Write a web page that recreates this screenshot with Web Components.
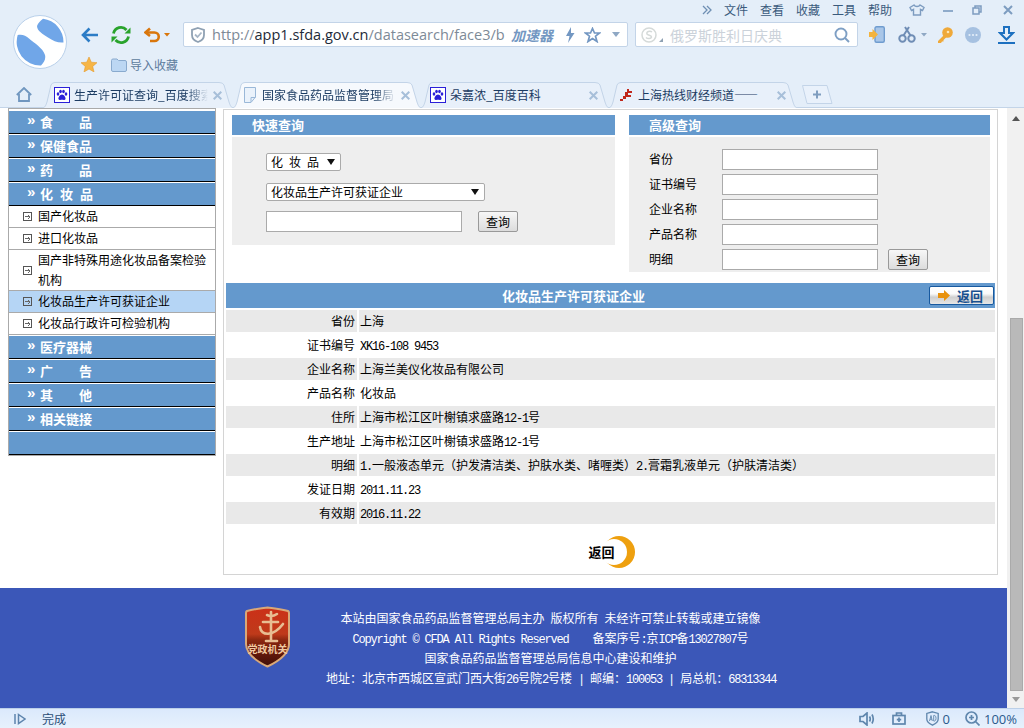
<!DOCTYPE html>
<html lang="zh">
<head>
<meta charset="utf-8">
<title>化妆品生产许可获证企业</title>
<style>
  html, body { margin: 0; padding: 0; height: 100%; overflow: hidden; background: #fff; }
  body { font: 12px/20px "Noto Sans CJK SC", "Liberation Sans", sans-serif; color: #000; }
</style>
</head>
<body>
<browser-window>
  <browser-toolbar slot="chrome"></browser-toolbar>
  <tab-strip slot="chrome">
    <browser-tab width="190" icon="paw" fade>生产许可证查询_百度搜索</browser-tab>
    <browser-tab width="188" icon="doc" active fade>国家食品药品监督管理局</browser-tab>
    <browser-tab width="188" icon="paw" pad="10">朵嘉浓_百度百科</browser-tab>
    <browser-tab width="188" icon="fin">上海热线财经频道——</browser-tab>
  </tab-strip>

  <page-body>
    <side-nav slot="side">
      <nav-head>食&emsp;&emsp;品</nav-head>
      <nav-head>保健食品</nav-head>
      <nav-head>药&emsp;&emsp;品</nav-head>
      <nav-head spaced>化妆品</nav-head>
      <nav-item>国产化妆品</nav-item>
      <nav-item>进口化妆品</nav-item>
      <nav-item>国产非特殊用途化妆品备案检验机构</nav-item>
      <nav-item selected>化妆品生产许可获证企业</nav-item>
      <nav-item>化妆品行政许可检验机构</nav-item>
      <nav-head>医疗器械</nav-head>
      <nav-head>广&emsp;&emsp;告</nav-head>
      <nav-head>其&emsp;&emsp;他</nav-head>
      <nav-head>相关链接</nav-head>
      <nav-head></nav-head>
    </side-nav>

    <main-panel slot="main">
      <search-forms></search-forms>
      <title-bar>化妆品生产许可获证企业</title-bar>
      <info-table>
        <info-row label="省份">上海</info-row>
        <info-row label="证书编号"><latin-run>XK16-108 9453</latin-run></info-row>
        <info-row label="企业名称">上海兰美仪化妆品有限公司</info-row>
        <info-row label="产品名称">化妆品</info-row>
        <info-row label="住所">上海市松江区叶榭镇求盛路<latin-run>12-1</latin-run>号</info-row>
        <info-row label="生产地址">上海市松江区叶榭镇求盛路<latin-run>12-1</latin-run>号</info-row>
        <info-row label="明细"><latin-run>1.</latin-run>一般液态单元（护发清洁类、护肤水类、啫喱类）<latin-run>2.</latin-run>膏霜乳液单元（护肤清洁类）</info-row>
        <info-row label="发证日期"><latin-run>2011.11.23</latin-run></info-row>
        <info-row label="有效期"><latin-run>2016.11.22</latin-run></info-row>
      </info-table>
      <round-back>返回</round-back>
    </main-panel>

    <site-footer slot="footer">
      <div>本站由国家食品药品监督管理总局主办<latin-run>&nbsp;</latin-run>版权所有<latin-run>&nbsp;</latin-run>未经许可禁止转载或建立镜像</div>
      <div><latin-run>Copyright © CFDA All Rights Reserved&nbsp;&nbsp;&nbsp;&nbsp;</latin-run>备案序号<latin-run>:</latin-run>京<latin-run>ICP</latin-run>备<latin-run>13027807</latin-run>号</div>
      <div>国家食品药品监督管理总局信息中心建设和维护</div>
      <div>地址：北京市西城区宣武门西大街<latin-run>26</latin-run>号院<latin-run>2</latin-run>号楼<latin-run>&nbsp;|&nbsp;</latin-run>邮编：<latin-run>100053&nbsp;|&nbsp;</latin-run>局总机：<latin-run>68313344</latin-run></div>
    </site-footer>

    <page-scrollbar slot="scroll"></page-scrollbar>
  </page-body>

  <status-bar slot="status"></status-bar>
</browser-window>

<script>
const define = (name, css, html) => {
  customElements.define(name, class extends HTMLElement {
    constructor() {
      super();
      this.attachShadow({ mode: 'open' });
    }
    connectedCallback() {
      const body = typeof html === 'function' ? html(this) : html;
      this.shadowRoot.innerHTML = `<style>${css}</style>${body}`;
    }
  });
};

define('browser-window', `
  :host { display: flex; flex-direction: column; width: 1024px; height: 728px; overflow: hidden; }
`, `<slot name="chrome"></slot><slot></slot><slot name="status"></slot>`);

define('latin-run', `
  :host { display: inline; font: 12px "Liberation Mono", monospace; letter-spacing: -1.2px; }
`, `<slot></slot>`);

// top of the browser: logo, menu, address bar, favourites
define('browser-toolbar', `
  :host { display: grid; grid-template-columns: 81px minmax(0, 1fr); grid-template-rows: 22px 25px 34px;
    height: 81px; background: #e4eef9; color: #3a5a7c; }
  svg { display: block; flex: none; }
  .logo { grid-row: 1 / 4; padding: 15px 0 0 13px; }
  .menu { display: flex; align-items: center; justify-content: flex-end; padding: 0 11px 2px 0; gap: 12px; line-height: 20px; }
  .address { display: flex; align-items: center; }
  .box { display: flex; align-items: center; box-sizing: border-box; height: 25px; background: #fff;
    border: 1px solid #c3d4e8; border-radius: 2px; flex: none; }
  .url-box { width: 445px; margin-left: 13px; padding-left: 7px; }
  .url { margin-left: 7px; width: 291px; flex: none; font: 14.5px/22px "Open Sans", "Noto Sans", sans-serif; color: #7d8a97; white-space: nowrap; }
  .url b { font-weight: 400; color: #1d2a38; }
  .boost { margin-left: 8px; font: italic 700 14px/20px "Noto Sans CJK SC", sans-serif; color: #7397c2; }
  .search-box { width: 223px; margin-left: 7px; padding-left: 5px; }
  .hint { margin-left: 7px; font-size: 14px; line-height: 20px; color: #cbd2da; white-space: nowrap; }
  .favs { display: flex; align-items: center; padding-top: 1px; color: #5d7b9c; }
  .favs span { margin-left: 3px; }
`, `
  <div class="logo">
    <svg width="54" height="54" viewBox="0 0 54 54">
      <circle cx="27" cy="27" r="26.5" fill="#fff" stroke="#b9d0ea"/>
      <path d="M24 11C25 8 27 6 30 3.700A23.500 23.500 0 0 1 50.500 27.500C45 28 40 26 35 22.500C30 19 24 16 24 11Z" fill="#70a6e8"/>
      <path d="M4.700 20C9 19 13 20.500 16 23.500C21 28 30 33 32 40C33 44 31 48 28 50.400A23.500 23.500 0 0 1 4.700 20Z" fill="#70a6e8"/>
    </svg>
  </div>
  <div class="menu">
    <svg width="10" height="10" viewBox="0 0 10 10" fill="none" stroke="#6f8fb3" stroke-width="1.300"><path d="M1 1L5 5L1 9M5 1L9 5L5 9"/></svg>
    <span>文件</span><span>查看</span><span>收藏</span><span>工具</span>
    <span>帮助</span>
    <svg style="margin-left:5px" width="16" height="12" viewBox="0 0 16 12" fill="none" stroke="#7d9cc0" stroke-width="1.400"><path d="M5 1L1 3.500L2.500 6.500L4.500 5.500V11H11.500V5.500L13.500 6.500L15 3.500L11 1C10 3 6 3 5 1Z"/></svg>
    <svg style="margin-left:6px" width="10" height="10" viewBox="0 0 10 10"><rect y="5" width="10" height="2" fill="#8fabcb"/></svg>
    <svg style="margin-left:7px" width="10" height="10" viewBox="0 0 10 10" fill="none" stroke="#7d9cc0" stroke-width="1.500"><path d="M3 3V1H9V7H7"/><rect x="1" y="3" width="6" height="6"/></svg>
    <svg style="margin-left:9px" width="10" height="10" viewBox="0 0 10 10" fill="none" stroke="#7d9cc0" stroke-width="2"><path d="M1 1L9 9M9 1L1 9"/></svg>
  </div>
  <div class="address">
    <svg width="17" height="16" viewBox="0 0 17 16" fill="none" stroke="#2c7cc6" stroke-width="2.600"><path d="M17 8H2M8.500 1.500L2 8L8.500 14.500"/></svg>
    <svg style="margin-left:13px" width="20" height="20" viewBox="0 0 20 20" fill="none" stroke="#29a32c" stroke-width="2.800">
      <path d="M2.500 8.500A7.500 7.500 0 0 1 15.500 5"/><path d="M17.500 11.500A7.500 7.500 0 0 1 4.500 15"/>
      <path d="M19.500 2.500V8.500H13.500Z" fill="#29a32c" stroke="none"/><path d="M.500 17.500V11.500H6.500Z" fill="#29a32c" stroke="none"/>
    </svg>
    <svg style="margin-left:13px" width="17" height="16" viewBox="0 0 17 16" fill="none" stroke="#d9760c" stroke-width="2.600"><path d="M6 1.500L1.500 5.500L6 9"/><path d="M2 5.500H10.500A4.200 4.200 0 0 1 10.500 14H6"/></svg>
    <svg style="margin-left:3px" width="6" height="4" viewBox="0 0 6 4"><path d="M0 0H6L3 3.500Z" fill="#d9760c"/></svg>
    <div class="box url-box">
      <svg width="14" height="16" viewBox="0 0 14 16" fill="none" stroke="#8fa1b3" stroke-width="1.800"><path d="M7 1L13 3V8C13 11.500 10 14 7 15C4 14 1 11.500 1 8V3Z"/><path d="M4 7.500L6.500 10L10.500 5.500" stroke="#a7b6c6"/></svg>
      <div class="url">http://<b>app1.sfda.gov.cn</b>/datasearch/face3/b</div>
      <div class="boost">加速器</div>
      <svg style="margin-left:12px" width="10" height="16" viewBox="0 0 10 16"><path d="M6 0L1 9H4.500L3 16L9.500 6H6Z" fill="#7397c2"/></svg>
      <svg style="margin-left:9px" width="17" height="16" viewBox="0 0 17 16" fill="none" stroke="#7397c2" stroke-width="1.700"><path d="M8.500 1.500L10.500 6H15.500L11.500 9.200L13 14.500L8.500 11.500L4 14.500L5.500 9.200L1.500 6H6.500Z"/></svg>
      <svg style="margin-left:11px" width="8" height="5" viewBox="0 0 8 5"><path d="M0 0H8L4 5Z" fill="#8fa8c4"/></svg>
    </div>
    <div class="box search-box">
      <svg width="22" height="16" viewBox="0 0 22 16" fill="none" stroke="#d5dad9" stroke-width="1.500"><circle cx="8" cy="8" r="7"/><path d="M11 5C9 3.500 5 4.500 6 7C7 8.500 10.500 8 10.500 10C10 12 6.500 12 5 10.500"/><path d="M18 15H22V11Z" fill="#8fa1b3" stroke="none"/></svg>
      <div class="hint">俄罗斯胜利日庆典</div>
      <svg style="margin-left:auto;margin-right:7px" width="16" height="16" viewBox="0 0 16 16" fill="none" stroke="#7e9fc4" stroke-width="1.900"><circle cx="7" cy="7" r="5.500"/><path d="M11 11L15 15"/></svg>
    </div>
    <svg style="margin-left:11px" width="16" height="17" viewBox="0 0 16 17"><rect x="6" y=".8" width="9.300" height="15.400" rx="1.500" fill="#a9c6e8" stroke="#6f9ccf" stroke-width="1.400"/><path d="M0 6H3.500V3L9 8.500L3.500 14V11H0Z" fill="#f3b33d"/></svg>
    <svg style="margin-left:13px" width="18" height="17" viewBox="0 0 18 17" fill="none" stroke="#6f8db5" stroke-width="2"><circle cx="4.500" cy="12.500" r="3.200"/><circle cx="13.500" cy="12.500" r="3.200"/><path d="M5.500 9.500L11 1M12.500 9.500L7 1"/></svg>
    <svg style="margin-left:5px" width="6" height="4" viewBox="0 0 6 4"><path d="M0 0H6L3 3.500Z" fill="#8fa8c4"/></svg>
    <svg style="margin-left:10px" width="16" height="16" viewBox="0 0 16 16"><circle cx="10.500" cy="5.500" r="5.300" fill="#efa93a"/><path d="M7 8L1 14V16H4L5 14.500H6.500V13L9.500 10Z" fill="#efa93a"/><circle cx="11" cy="5" r="1.300" fill="#fde6b5"/></svg>
    <svg style="margin-left:12px" width="16" height="16" viewBox="0 0 16 16"><circle cx="8" cy="8" r="8" fill="#a6c1e1"/><circle cx="4.500" cy="8" r="1.100" fill="#e4eef9"/><circle cx="8" cy="8" r="1.100" fill="#e4eef9"/><circle cx="11.500" cy="8" r="1.100" fill="#e4eef9"/></svg>
    <svg style="margin-left:17px" width="17" height="18" viewBox="0 0 17 18" fill="none" stroke="#1d70c0" stroke-width="2"><path d="M6 1H11V7H15L8.500 13.500L2 7H6Z"/><path d="M0 17H17"/></svg>
  </div>
  <div class="favs">
    <svg width="16" height="15" viewBox="0 0 16 15"><path d="M8 0L10.300 5.200L16 5.700L11.700 9.400L13 15L8 12L3 15L4.300 9.400L0 5.700L5.700 5.200Z" fill="#f6b546" stroke="#e59a2b" stroke-width=".6"/></svg>
    <svg style="margin-left:14px" width="16" height="14" viewBox="0 0 16 14"><path d="M.5 2.500Q.5 1 2 1H6L7.500 2.500H14Q15.500 2.500 15.500 4V12Q15.500 13.500 14 13.500H2Q.5 13.500 .5 12Z" fill="#bcd7f3" stroke="#89aace"/></svg>
    <span>导入收藏</span>
  </div>
`);

define('tab-strip', `
  :host { display: flex; align-items: flex-end; height: 27px; background: #e4eef9;
    box-shadow: inset 0 -1px 0 #c3d4e8; }
  .home { width: 42px; flex: none; display: flex; justify-content: center; align-self: center; padding-left: 6px; box-sizing: border-box; }
  .plus { flex: none; margin: 0 0 4px 6px; }
  svg { display: block; }
`, `
  <div class="home">
    <svg width="16" height="15" viewBox="0 0 16 15" fill="none" stroke="#6f96bf" stroke-width="1.800"><path d="M.8 8L8 1L15.200 8"/><path d="M3 7V14H13V7"/></svg>
  </div>
  <slot></slot>
  <svg class="plus" width="31" height="19" viewBox="0 0 31 19"><path d="M.5 .5H25L30 18.500H5Z" fill="#e9f1fb" stroke="#c3d4e8"/><path d="M15 5.500V13.500M11 9.500H19" stroke="#7f9dbf" stroke-width="2"/></svg>
`);

const tabIcons = {
  paw: `<svg width="16" height="16" viewBox="0 0 16 16"><rect x=".5" y=".5" width="15" height="15" fill="#fff" stroke="#2a1fd8"/><g fill="#2a1fd8"><ellipse cx="4" cy="7" rx="1.300" ry="1.800"/><ellipse cx="6.500" cy="4.500" rx="1.300" ry="1.700"/><ellipse cx="9.500" cy="4.500" rx="1.300" ry="1.700"/><ellipse cx="12" cy="7" rx="1.300" ry="1.800"/><path d="M8 7.500C6 7.500 4 10.500 4.500 12C5 13.500 7 12.800 8 12.800C9 12.800 11 13.500 11.500 12C12 10.500 10 7.500 8 7.500Z"/></g></svg>`,
  doc: `<svg width="12" height="16" viewBox="0 0 12 16"><path d="M.5 .5H11.500V10L7 15.500H.5Z" fill="#eaf2fb" stroke="#9ab8d8"/><path d="M7 15V10.500H11.500" fill="none" stroke="#9ab8d8"/></svg>`,
  fin: `<svg width="12" height="12" viewBox="0 0 12 12"><path d="M0 10H3V12H0ZM3 7H6V10H3ZM5 3H8V7H5ZM7 0H9V2H12V4H7ZM6 6H11V8H6Z" fill="#c0281c"/></svg>`
};

define('browser-tab', `
  :host { display: block; position: relative; height: 26px; margin-bottom: 0; flex: none; color: #1c3c63; }
  :host([active]) { z-index: 1; }
  svg.shape { position: absolute; left: 0; top: 0; }
  .row { position: relative; display: flex; align-items: center; height: 26px; line-height: 18px; }
  .icon { width: 20px; flex: none; }
  .icon.doc, .icon.fin { width: 18px; }
  .icon svg { display: block; }
  .label { flex: 1; white-space: nowrap; overflow: hidden; min-width: 0; }
  :host([fade]) .label { -webkit-mask-image: linear-gradient(90deg, #000 84%, transparent 100%); mask-image: linear-gradient(90deg, #000 84%, transparent 100%); }
  .x { flex: none; margin: 0 10px 0 5px; display: block; }
`, (el) => {
  const w = +el.getAttribute('width');
  const pad = el.getAttribute('pad') || 12;
  const active = el.hasAttribute('active');
  const name = el.getAttribute('icon');
  const d = `M0 26C3 26 4 23 5 20L9 3Q10 .5 13 .5H${w - 13}Q${w - 9} .5 ${w - 8} 3L${w - 3} 20C${w - 2} 23 ${w - 1} 26 ${w + 2} 26`;
  return `
    <style>:host { width: ${w}px; } .row { padding-left: ${pad}px; }</style>
    <svg class="shape" width="${w + 2}" height="26"><path d="${d}" fill="${active ? '#f6f9fd' : '#e8f0fa'}" stroke="#c3d4e8"/></svg>
    <div class="row">
      <div class="icon ${name}">${tabIcons[name]}</div>
      <div class="label"><slot></slot></div>
      <svg class="x" width="9" height="9" viewBox="0 0 9 9"><path d="M.7 .7L8.300 8.300M8.300 .7L.7 8.300" stroke="#a7bfd9" stroke-width="2"/></svg>
    </div>`;
});

define('page-body', `
  :host { display: grid; grid-template-columns: 1007px 17px; flex: 1; min-height: 0; }
  .page { display: grid; grid-template-columns: 208px 775px; grid-template-rows: 480px 120px; column-gap: 7px; padding-left: 8px; }
  .footer { grid-column: 1 / 3; margin-left: -8px; width: 1007px; }
`, `
  <div class="page">
    <slot name="side"></slot>
    <slot name="main"></slot>
    <div class="footer"><slot name="footer"></slot></div>
  </div>
  <slot name="scroll"></slot>
`);

define('side-nav', `
  :host { display: block; align-self: start; box-sizing: border-box; width: 208px;
    border: 1px solid #aaa; padding-top: 1px; background: #fff; }
`, `<slot></slot>`);

define('nav-head', `
  :host { display: flex; align-items: center; box-sizing: border-box; height: 24px; padding: 0 0 1px 18px;
    background: #6499cd; color: #fff; border-top: 1px solid #fff; border-bottom: 1px solid #000;
    font-size: 13px; font-weight: 700; line-height: 20px; white-space: nowrap; }
  :host([spaced]) .t { letter-spacing: 7px; }
  .m { width: 13px; flex: none; font: 700 15px/20px "Liberation Sans", sans-serif; margin-top: -3px; }
`, (el) => `<span class="m">${el.textContent.trim() ? '»' : ''}</span><span class="t"><slot></slot></span>`);

define('nav-item', `
  :host { display: flex; align-items: center; box-sizing: border-box; min-height: 22px; padding: 0 6px 0 14px;
    background: #fff; border-bottom: 1px solid #aaa; line-height: 20px; }
  :host([selected]) { background: #b5d5f5; }
  svg { flex: none; margin-right: 6px; }
  div { align-self: flex-start; }
`, `
  <svg width="9" height="9" viewBox="0 0 9 9" fill="none" stroke="#555" shape-rendering="crispEdges"><rect x=".5" y=".5" width="8" height="8" rx="1"/><path d="M2 4.500H6.500M5 2.500V3.500M6 3.500V5.500M5 5.500V6.500" stroke="#666"/></svg>
  <div><slot></slot></div>
`);

define('main-panel', `
  :host { display: block; align-self: start; box-sizing: border-box; width: 775px; height: 466px; margin-top: 1px;
    border: 1px solid #d4d4d4; padding: 0 2px; background: #fff; }
`, `<slot></slot>`);

define('field-box', `
  :host { display: block; box-sizing: border-box; height: 21px; background: #fff; border: 1px solid #aaa; }
`, ``);

define('push-button', `
  :host { display: flex; align-items: center; justify-content: center; box-sizing: border-box; width: 40px; height: 21px;
    border: 1px solid #999; border-radius: 2px; background: linear-gradient(#f7f7f7, #dcdcdc); line-height: 18px; }
`, `<slot></slot>`);

define('drop-box', `
  :host { display: flex; align-items: center; justify-content: space-between; box-sizing: border-box; height: 18px;
    padding: 0 5px 0 4px; background: #fff; border: 1px solid #aaa; border-radius: 2px; line-height: 16px; white-space: nowrap; }
  i { width: 0; height: 0; border: 4px solid transparent; border-top: 6px solid #111; border-bottom: 0; }
`, `<span><slot></slot></span><i></i>`);

define('panel-head', `
  :host { display: block; height: 20px; padding-left: 20px; background: #6499cd; color: #fff;
    font-size: 13px; font-weight: 700; line-height: 19px; }
`, `<slot></slot>`);

define('search-forms', `
  :host { display: grid; grid-template-columns: 383px 361px; column-gap: 14px; padding: 5px 0 0 6px; align-items: start; }
  .body { margin-top: 2px; background: #eee; }
  .quick { height: 108px; box-sizing: border-box; padding: 16px 0 0 34px; display: flex; flex-direction: column; align-items: flex-start; gap: 12px; }
  .spaced { letter-spacing: 6px; }
  .line { display: flex; gap: 16px; margin-top: -2px; }
  .adv { height: 135px; box-sizing: border-box; padding: 12px 0 0 20px; display: grid;
    grid-template-columns: 63px 156px 40px; grid-auto-rows: 21px; row-gap: 4px; column-gap: 10px; line-height: 20px; }
  .adv span { white-space: nowrap; }
`, `
  <section>
    <panel-head>快速查询</panel-head>
    <div class="body quick">
      <drop-box style="width:75px"><span class="spaced">化妆品</span></drop-box>
      <drop-box style="width:219px">化妆品生产许可获证企业</drop-box>
      <div class="line"><field-box style="width:196px"></field-box><push-button>查询</push-button></div>
    </div>
  </section>
  <section>
    <panel-head>高级查询</panel-head>
    <div class="body adv">
      <span>省份</span><field-box></field-box><div></div>
      <span>证书编号</span><field-box></field-box><div></div>
      <span>企业名称</span><field-box></field-box><div></div>
      <span>产品名称</span><field-box></field-box><div></div>
      <span>明细</span><field-box></field-box><push-button>查询</push-button>
    </div>
  </section>
`);

define('title-bar', `
  :host { display: flex; align-items: center; box-sizing: border-box; height: 25px; margin-top: 11px; padding: 0 1px 0 276px;
    background: #6499cd; color: #fff; font-size: 13px; font-weight: 700; line-height: 20px; }
  .back { display: flex; align-items: center; box-sizing: border-box; width: 65px; height: 19px; margin-left: auto; padding-left: 8px; gap: 7px;
    border: 1px solid #17599f; border-radius: 2px; background: linear-gradient(#fff, #fafafa 40%, #cfcfcf 60%, #e6e6e6);
    color: #17508f; }
`, `
  <div><slot></slot></div>
  <div class="back">
    <svg width="12" height="11" viewBox="0 0 12 11"><path d="M0 3H6V0L12 5.500L6 11V8H0Z" fill="#e8920d"/></svg>
    <span>返回</span>
  </div>
`);

define('info-table', `
  :host { display: grid; grid-auto-rows: 22px; row-gap: 2px; padding-top: 2px; }
`, `<slot></slot>`);

define('info-row', `
  :host { display: grid; grid-template-columns: 131px 1fr; column-gap: 2px; line-height: 22px; white-space: nowrap; }
  :host(:nth-child(odd)) { background: linear-gradient(90deg, #e9e9e9 131px, #fff 131px, #fff 133px, #e9e9e9 133px); }
  .k { text-align: right; padding-right: 2px; }
  .v { padding-left: 1px; }
`, (el) => `<div class="k">${el.getAttribute('label')}</div><div class="v"><slot></slot></div>`);

define('round-back', `
  :host { display: block; position: relative; width: 46px; height: 32px; margin: 12px auto 0; left: 1px; font-weight: 700; font-size: 13px; line-height: 32px; }
  svg { position: absolute; right: 0; top: 0; }
  span { position: relative; white-space: nowrap; }
`, `
  <svg width="36" height="32" viewBox="0 0 36 32"><circle cx="20" cy="16" r="16" fill="#eea00f"/><circle cx="15" cy="16" r="13" fill="#fff"/></svg>
  <span><slot></slot></span>
`);

define('site-footer', `
  :host { display: flex; box-sizing: border-box; width: 1007px; height: 120px; padding: 20px 0 0 245px;
    background: #3b57b8; color: #fff; line-height: 20px; }
  svg { flex: none; margin-top: -2px; }
  .text { width: 449px; margin-left: 36px; text-align: center; white-space: nowrap; }
`, `
  <svg width="45" height="62" viewBox="0 0 45 62">
    <defs><linearGradient id="s" x1="0" y1="0" x2="0" y2="1">
      <stop offset="0" stop-color="#cc3018"/><stop offset=".45" stop-color="#bf3a1a"/><stop offset=".55" stop-color="#8c2810"/><stop offset=".7" stop-color="#6e1c0c"/><stop offset="1" stop-color="#3f0f08"/>
    </linearGradient></defs>
    <path d="M2 5C9 3 15 2.500 22.500 1.500C30 2.500 36 3 43 5Q44 5.500 44 7V38C44 49 32 56 22.500 60.500C13 56 1 49 1 38V7Q1 5.500 2 5Z" fill="url(#s)" stroke="#d9a878" stroke-width="2"/>
    <g fill="none" stroke="#e8bd92" stroke-width="2.600" stroke-linecap="round">
      <path d="M26 6V34"/><path d="M22 9C25 10.500 29 10 32 8"/><path d="M18 16H33"/><path d="M15 21C16 30 28 31 38 18"/><path d="M21 35H32"/>
    </g>
    <text x="22.500" y="47" text-anchor="middle" font-size="10" font-weight="700" fill="#f0c9a0">党政机关</text>
  </svg>
  <div class="text"><slot></slot></div>
`);

define('page-scrollbar', `
  :host { display: flex; flex-direction: column; align-items: center; width: 17px; background: #f1f1f1; }
  .up, .down { flex: none; width: 0; height: 0; border: 4px solid transparent; margin-left: 1px; }
  .up { border-top: 0; border-bottom: 5px solid #555; margin-top: 8px; }
  .gap { height: 197px; flex: none; }
  .thumb { box-sizing: border-box; flex: none; width: 13px; margin-left: 2px; height: 373px; background: #b9b9b9; border: 1px solid #aaa; }
  .down { border-bottom: 0; border-top: 5px solid #999; margin-top: 6px; }
`, `<div class="up"></div><div class="gap"></div><div class="thumb"></div><div class="down"></div>`);

define('status-bar', `
  :host { display: flex; align-items: center; box-sizing: border-box; height: 20px; padding: 0 7px 0 14px;
    border-top: 1px solid #bcd0e8; background: linear-gradient(#dbe9fc, #e7f1fc); color: #2a4d76; line-height: 18px; }
  svg { display: block; flex: none; }
  .done { margin-left: 16px; }
  .end { margin-left: auto; display: flex; align-items: center; color: #2a5a8c; font: 13px/18px "Open Sans", sans-serif; }
`, `
  <svg width="12" height="12" viewBox="0 0 12 12" fill="none" stroke="#5d84ad" stroke-width="1.500"><path d="M1 1V11M4.500 1.500L11 6L4.500 10.500Z"/></svg>
  <span class="done">完成</span>
  <div class="end">
    <svg width="16" height="14" viewBox="0 0 16 14" fill="none" stroke="#5f86ad" stroke-width="1.700"><path d="M1 4.500H4L8 1V13L4 9.500H1Z"/><path d="M10.500 4.500Q12 7 10.500 9.500M13 2.500Q15.500 7 13 11.500"/></svg>
    <svg style="margin-left:17px" width="14" height="13" viewBox="0 0 14 13" fill="none" stroke="#5f86ad" stroke-width="1.700"><rect x="1" y="3.500" width="12" height="8.500"/><path d="M4.500 3.500V1H9.500V3.500M7 5.500V10M4.800 7.700H9.200"/></svg>
    <svg style="margin-left:20px" width="13" height="15" viewBox="0 0 13 15" fill="none" stroke="#5f86ad" stroke-width="1.300"><path d="M6.500 .8L12.200 2.500V8C12.200 11 9 13 6.500 14.200C4 13 .8 11 .8 8V2.500Z"/><path d="M3.500 10L5 4.500L6.300 10M4 8.200H6M7.700 4.500V10H8.700C10.500 10 10.500 4.500 8.700 4.500Z" stroke-width=".9"/></svg>
    <span style="margin-left:4px">0</span>
    <svg style="margin-left:15px" width="15" height="15" viewBox="0 0 15 15" fill="none" stroke="#5f86ad" stroke-width="1.700"><circle cx="6.500" cy="6.500" r="5.500"/><path d="M10.500 10.500L14.500 14.500M6.500 4V9M4 6.500H9"/></svg>
    <span style="margin-left:4px">100%</span>
  </div>
`);
</script>
</body>
</html>
